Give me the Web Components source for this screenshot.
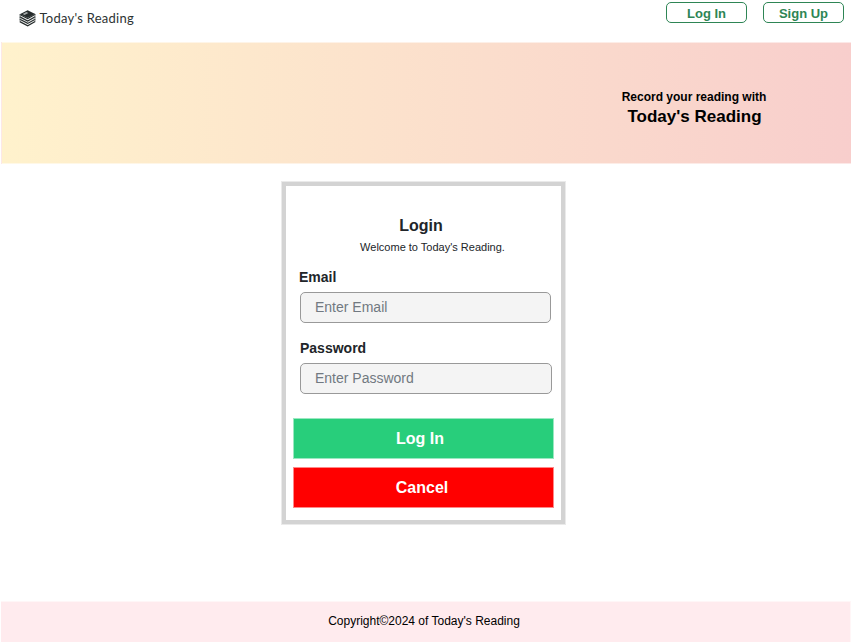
<!DOCTYPE html>
<html lang="en">
<head>
<meta charset="utf-8">
<title>Today's Reading</title>
<style>
html,body{margin:0;height:100%;overflow:hidden;background:#fff}
body{font-family:"Liberation Sans",Arial,sans-serif;color:#212529}
</style>
</head>
<body>
<reading-page></reading-page>
<script>
const define = (name, css, html) => customElements.define(name, class extends HTMLElement {
  constructor() {
    super();
    this.attachShadow({mode: 'open'}).innerHTML = `<style>*{box-sizing:border-box}${css}</style>${typeof html === 'function' ? html(this) : html}`;
  }
});

define('book-logo', `
  :host{display:flex;align-items:center;height:20px;color:#2d3333}
  svg{display:block;width:17px;height:18px;margin-right:3.5px}
  span{font:13px/20px Lato,sans-serif;letter-spacing:.25px;white-space:nowrap}
`, `<svg viewBox="0 0 17 18">
  <path d="M.8 5.2 8.6 1.2l7.6 3.8-7.5 4.1z" fill="#252b2b"/>
  <path d="M3.6 4.9 7.4 3l2 .9-3.9 2z" fill="#a5a9a9"/>
  <path d="M.8 5.2v7.4l7.9 4.4 7.5-4.4V5L8.7 9.1z" fill="#f2f3f3"/>
  <path d="M.8 5.5 8.7 9.5l7.5-4.2M.8 7.9l7.9 4.1 7.5-4.2M.8 10.3l7.9 4.1 7.5-4.2M.8 12.6l7.9 4.2 7.5-4.3" fill="none" stroke="#252b2b" stroke-width="1.2"/>
  <path d="M1 5.2v7.4M16 5.1v7.4" stroke="#626767" stroke-width=".7"/>
</svg><span>Today's Reading</span>`);

define('nav-button', `
  :host{display:block;width:81px;height:21px}
  button{display:block;width:100%;height:100%;padding:0;border:1px solid #2e8555;border-radius:5px;background:#fff;color:#2e8555;font:bold 13px/21px "Liberation Sans",Arial,sans-serif}
`, `<button><slot></slot></button>`);

define('top-bar', `
  :host{display:flex;justify-content:space-between;align-items:flex-start;height:42px;padding:2px 7px 0 19px}
  book-logo{margin-top:6px}
  nav{display:flex;gap:16px}
`, `<book-logo></book-logo><nav><nav-button>Log In</nav-button><nav-button>Sign Up</nav-button></nav>`);

define('hero-banner', `
  :host{display:flex;justify-content:flex-end;height:122px;margin-left:1px;padding:46px 84px 0 0;color:#000;background:linear-gradient(90deg,#fff2cc,#f8cecc);border:solid #fff8;border-width:1px 0 1px 1px}
  div{width:146px;text-align:center;white-space:nowrap}
  p{margin:0;font:bold 12px/16px "Liberation Sans",Arial,sans-serif}
  h1{margin:2px 0 0 1px;font:bold 17px/20px "Liberation Sans",Arial,sans-serif}
`, `<div><p>Record your reading with</p><h1>Today's Reading</h1></div>`);

define('form-field', `
  :host{display:block}
  label{display:block;margin-left:var(--label-shift,0);font:bold 14px/18px "Liberation Sans",Arial,sans-serif;color:#212529}
  input{display:block;width:100%;height:31px;margin-top:6px;padding:0 14px 2px;border:1px solid #999;border-radius:5px;background:#f4f4f4;font:14px/27px "Liberation Sans",Arial,sans-serif;outline:0}
  input::placeholder{color:#717981;opacity:1}
`, el => `<label><slot></slot></label><input type="${el.getAttribute('type')}" placeholder="${el.getAttribute('placeholder')}">`);

define('action-button', `
  :host{display:block;height:41px}
  button{display:block;width:100%;height:100%;padding:0 var(--inset,5px) 0 0;border:1px solid #fff8;background:var(--fill);color:#fff;font:bold 16px/39px "Liberation Sans",Arial,sans-serif}
`, `<button><slot></slot></button>`);

define('login-card', `
  :host{display:flex;flex-direction:column;width:285px;height:344px;padding:31px 7px 0;border:5px solid #d3d3d3;outline:1px solid #fff8;outline-offset:-1px}
  h2{margin:0 0 0 -5px;text-align:center;font:bold 16px/18px "Liberation Sans",Arial,sans-serif}
  p{margin:5px 0 0 18px;text-align:center;font:11px/14px "Liberation Sans",Arial,sans-serif}
  form-field{margin:14px 3px 0 7px}
  form-field:first-of-type{width:251px;--label-shift:-1px}
  form-field + form-field{margin-top:16px;width:252px}
  .actions{display:grid;gap:8px;margin-top:24px}
`, `<h2>Login</h2><p>Welcome to Today's Reading.</p>
<form-field type="text" placeholder="Enter Email">Email</form-field>
<form-field type="password" placeholder="Enter Password">Password</form-field>
<div class="actions"><action-button style="--fill:#28ce7b;--inset:7px">Log In</action-button><action-button style="--fill:#f00;--inset:3px">Cancel</action-button></div>`);

define('page-footer', `
  :host{display:block;height:41px;margin:0 0 0 1px;padding-right:3px;border:1px solid #fff8;border-width:1px 1px 0 0;background:#ffebee;color:#000;text-align:center;font:12px/38px "Liberation Sans",Arial,sans-serif}
`, `<slot></slot>`);

define('reading-page', `
  :host{display:flex;flex-direction:column;height:642px}
  main{flex:1;padding:17px 0 0 281px}
`, `<top-bar></top-bar><hero-banner></hero-banner><main><login-card></login-card></main><page-footer>Copyright©2024 of Today's Reading</page-footer>`);
</script>
</body>
</html>
